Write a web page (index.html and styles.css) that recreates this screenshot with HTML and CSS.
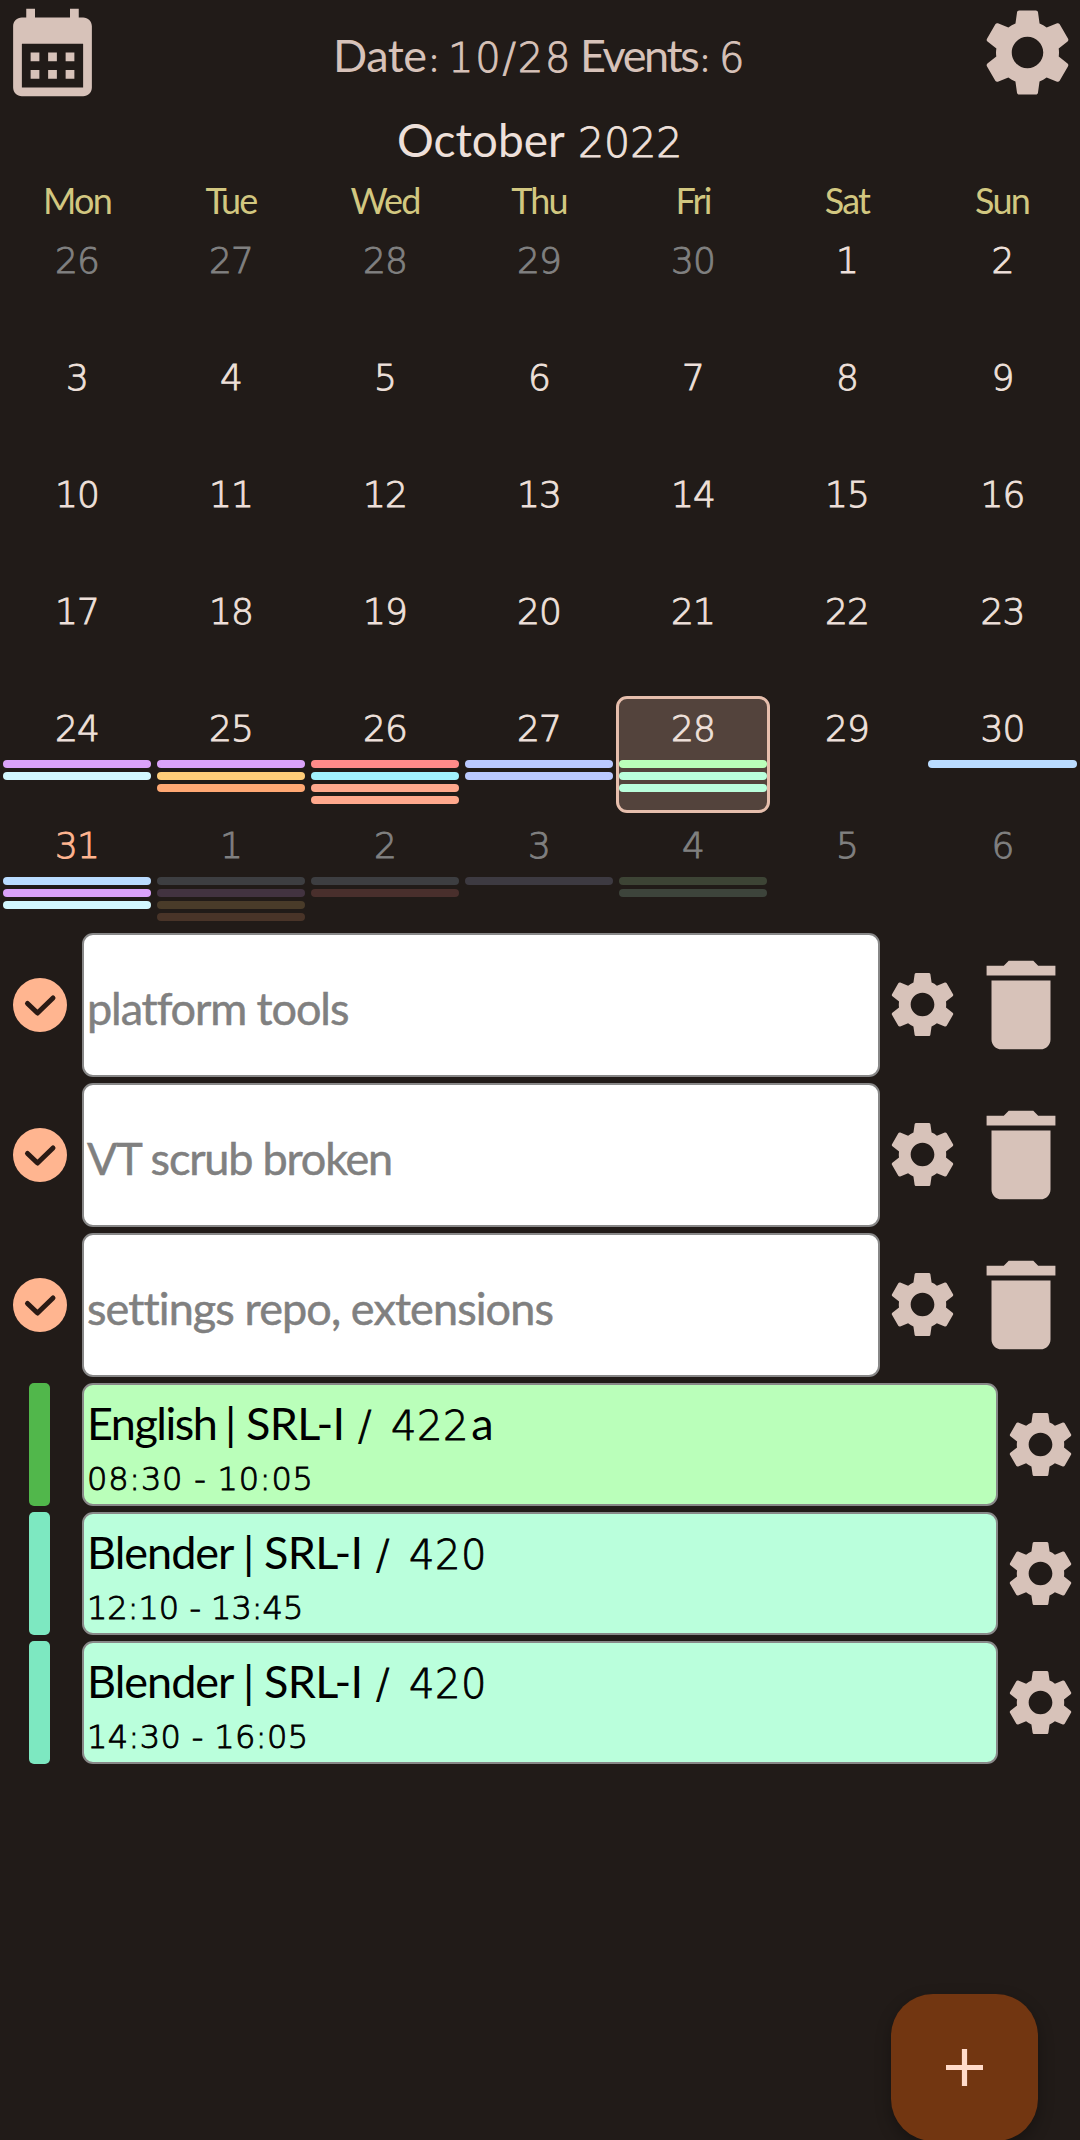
FILE: index.html
```html
<!DOCTYPE html>
<html lang="en">
<head>
<meta charset="utf-8">
<title>Calendar</title>
<link rel="stylesheet" href="styles.css">
</head>
<body>
<svg class="defs" aria-hidden="true">
  <symbol id="gear" viewBox="0 0 24 24"><path d="M19.14 12.94c.04-.3.06-.61.06-.94 0-.32-.02-.64-.07-.94l2.03-1.58c.18-.14.23-.41.12-.61l-1.92-3.32c-.12-.22-.37-.29-.59-.22l-2.39.96c-.5-.38-1.03-.7-1.62-.94L14.4 2.81c-.04-.24-.24-.41-.48-.41h-3.84c-.24 0-.43.17-.47.41l-.36 2.54c-.59.24-1.13.57-1.62.94l-2.39-.96c-.22-.08-.47 0-.59.22L2.74 8.87c-.12.21-.08.47.12.61l2.03 1.58c-.05.3-.09.63-.09.94s.02.64.07.94l-2.03 1.58c-.18.14-.23.41-.12.61l1.92 3.32c.12.22.37.29.59.22l2.39-.96c.5.38 1.03.7 1.62.94l.36 2.54c.05.24.24.41.48.41h3.84c.24 0 .44-.17.47-.41l.36-2.54c.59-.24 1.13-.56 1.62-.94l2.39.96c.22.08.47 0 .59-.22l1.92-3.32c.12-.22.07-.47-.12-.61l-2.01-1.58zM12 15.6c-1.98 0-3.6-1.62-3.6-3.6s1.62-3.6 3.6-3.6 3.6 1.62 3.6 3.6-1.62 3.6-3.6 3.6z"/></symbol>
  <symbol id="trash" viewBox="0 0 24 24"><path d="M6 19c0 1.100.9 2 2 2h8c1.100 0 2-.9 2-2V7H6v12zM19 4h-3.500l-1-1h-5l-1 1H5v2h14V4z"/></symbol>
  <symbol id="calendar" viewBox="0 0 24 24"><path fill-rule="evenodd" d="M19 4h-1V2h-2v2H8V2H6v2H5c-1.110 0-2 .9-2 2v14c0 1.100.89 2 2 2h14c1.100 0 2-.9 2-2V6c0-1.100-.9-2-2-2zm0 16H5V10h14v10zM7 12h2v2H7zM11 12h2v2h-2zM15 12h2v2h-2zM7 16h2v2H7zM11 16h2v2h-2zM15 16h2v2h-2z"/></symbol>
  <symbol id="check" viewBox="0 0 54 54"><circle cx="27" cy="27" r="27" fill="#ffb590"/><path d="M14.500 25.500 24.500 35 40 20" fill="none" stroke="#2b1a14" stroke-width="5" stroke-linecap="round" stroke-linejoin="round"/></symbol>
</svg>
<main class="app">
  <header class="bar">
    <svg class="icon-lg"><use href="#calendar"/></svg>
    <div class="status"><span class="t1">Date</span><span class="c1">:</span><span class="n1">10/28</span><span class="t2">Events</span><span class="c1">:</span><span class="n2">6</span></div>
    <svg class="icon-lg"><use href="#gear"/></svg>
  </header>
  <h1 class="month"><span class="name">October</span><span class="year">2022</span></h1>
  <div class="weekdays"><span>Mon</span><span>Tue</span><span>Wed</span><span>Thu</span><span>Fri</span><span>Sat</span><span>Sun</span></div>
  <section class="grid">
    <div class="day out"><b>26</b></div><div class="day out"><b>27</b></div><div class="day out"><b>28</b></div><div class="day out"><b>29</b></div><div class="day out"><b>30</b></div><div class="day"><b>1</b></div><div class="day"><b>2</b></div>
    <div class="day"><b>3</b></div><div class="day"><b>4</b></div><div class="day"><b>5</b></div><div class="day"><b>6</b></div><div class="day"><b>7</b></div><div class="day"><b>8</b></div><div class="day"><b>9</b></div>
    <div class="day"><b>10</b></div><div class="day"><b>11</b></div><div class="day"><b>12</b></div><div class="day"><b>13</b></div><div class="day"><b>14</b></div><div class="day"><b>15</b></div><div class="day"><b>16</b></div>
    <div class="day"><b>17</b></div><div class="day"><b>18</b></div><div class="day"><b>19</b></div><div class="day"><b>20</b></div><div class="day"><b>21</b></div><div class="day"><b>22</b></div><div class="day"><b>23</b></div>
    <div class="day"><b>24</b><i class="violet"></i><i class="ice"></i></div>
    <div class="day"><b>25</b><i class="violet"></i><i class="gold"></i><i class="orange"></i></div>
    <div class="day"><b>26</b><i class="red"></i><i class="cyan"></i><i class="salmon"></i><i class="salmon"></i></div>
    <div class="day"><b>27</b><i class="peri"></i><i class="peri"></i></div>
    <div class="day selected"><b>28</b><i class="green"></i><i class="mint"></i><i class="mint"></i></div>
    <div class="day"><b>29</b></div>
    <div class="day"><b>30</b><i class="sky"></i></div>
    <div class="day today"><b>31</b><i class="sky"></i><i class="violet"></i><i class="ice"></i></div>
    <div class="day out"><b>1</b><i class="sky"></i><i class="violet"></i><i class="gold"></i><i class="orange"></i></div>
    <div class="day out"><b>2</b><i class="sky"></i><i class="red"></i></div>
    <div class="day out"><b>3</b><i class="peri"></i></div>
    <div class="day out"><b>4</b><i class="green"></i><i class="mint"></i></div>
    <div class="day out"><b>5</b></div>
    <div class="day out"><b>6</b></div>
  </section>
  <section class="list">
    <article class="task"><svg class="check"><use href="#check"/></svg><div class="card"><span class="p1">platform tools</span></div><svg class="icon-sm"><use href="#gear"/></svg><svg class="trash"><use href="#trash"/></svg></article>
    <article class="task"><svg class="check"><use href="#check"/></svg><div class="card"><span class="p2">VT scrub broken</span></div><svg class="icon-sm"><use href="#gear"/></svg><svg class="trash"><use href="#trash"/></svg></article>
    <article class="task"><svg class="check"><use href="#check"/></svg><div class="card"><span class="p3">settings repo, extensions</span></div><svg class="icon-sm"><use href="#gear"/></svg><svg class="trash"><use href="#trash"/></svg></article>
    <article class="event"><div class="tag leaf"></div><div class="card green"><div class="title"><span class="subject english">English</span><span class="sep">|</span><span class="place">SRL-I</span><span class="slash">/</span><span class="room">422</span><span class="suffix">a</span></div><div class="time wide">08:30 - 10:05</div></div><svg class="icon-sm"><use href="#gear"/></svg></article>
    <article class="event"><div class="tag aqua"></div><div class="card mint"><div class="title"><span class="subject blender">Blender</span><span class="sep">|</span><span class="place">SRL-I</span><span class="slash">/</span><span class="room">420</span></div><div class="time">12:10 - 13:45</div></div><svg class="icon-sm"><use href="#gear"/></svg></article>
    <article class="event"><div class="tag aqua"></div><div class="card mint"><div class="title"><span class="subject blender">Blender</span><span class="sep">|</span><span class="place">SRL-I</span><span class="slash">/</span><span class="room">420</span></div><div class="time mid">14:30 - 16:05</div></div><svg class="icon-sm"><use href="#gear"/></svg></article>
  </section>
  <button class="fab" aria-label="Add"><svg viewBox="0 0 37 37"><path d="M0 18.500h37M18.500 0v37"/></svg></button>
</main>
</body>
</html>
```
FILE: styles.css
```css
* { box-sizing: border-box; }
html, body { margin: 0; height: 2140px; overflow: hidden; background: #211b18; }
.defs { position: absolute; width: 0; height: 0; }
svg { display: block; flex: none; fill: #d7c2b9; }
.app {
  position: relative; width: 1080px; height: 2140px; overflow: hidden;
  display: flex; flex-direction: column;
  font-family: Lato, "Open Sans", sans-serif; font-variant-ligatures: none;
  color: #eee0da; white-space: nowrap;
}
.bar { height: 105px; display: flex; color: #d7c2b9; font-size: 45px; }
.icon-lg { width: 105px; height: 105px; }
.status { flex: 1; padding: 28px 0 0 228px; display: flex; align-items: baseline; line-height: 54px; }
.t1 { width: 97px; letter-spacing: -0.5px; }
.c1 { width: 18px; font-size: 32px; }
.n1, .n2, .year, .room, .slash, .time, .day b {
  font-family: "DejaVu Sans", sans-serif; font-weight: 200; -webkit-text-stroke: 0.9px currentColor;
}
.n1 { width: 132px; font-size: 40px; letter-spacing: 1.8px; }
.t2 { width: 121px; letter-spacing: -2.4px; }
.n2 { font-size: 40px; }
.month { margin: 0; height: 72px; padding: 8px 0 0 397px; display: flex; align-items: baseline; font-size: 46px; font-weight: 400; line-height: 54px; }
.name { width: 181px; }
.year { font-size: 41px; }
.weekdays { height: 51px; display: grid; grid-template-columns: repeat(6, 154px) 156px; text-align: center; font-size: 36px; letter-spacing: -1.8px; line-height: 46px; color: #d2c780; }
.grid { height: 705px; display: grid; grid-template-columns: repeat(6, 154px) 156px; grid-auto-rows: 117px; }
.day { padding: 0 3px; display: flex; flex-direction: column; gap: 4px; }
.day:nth-child(7n) { padding-left: 4px; }
.day b { height: 60px; font-size: 36px; letter-spacing: -0.8px; line-height: 65px; text-align: center; }
.day i { height: 8px; border-radius: 4px; }
.out b { color: #808080; }
.out i { opacity: .18; }
.today b { color: #ffb590; }
.selected { background: #53433c; border: 3px solid #e6beac; border-radius: 11px; padding: 0; }
.selected b { height: 57px; line-height: 59px; }
.violet { background: #daa2f9; }
.ice { background: #d2f8ff; }
.gold { background: #ffcd79; }
.orange { background: #ffa873; }
.red { background: #ff8a8a; }
.cyan { background: #a2f2ff; }
.salmon { background: #ffa88c; }
.peri { background: #bac9ff; }
.green { background: #baffba; }
.mint { background: #baffdc; }
.sky { background: #badcff; }
.list { display: flex; flex-direction: column; gap: 6px; color: #000; }
.task { height: 144px; display: grid; grid-template-columns: 82px 798px 82px 118px; grid-template-rows: 144px; align-items: center; }
.check { width: 54px; height: 54px; margin-left: 13px; }
.card { height: 100%; border: 2px solid #888; border-radius: 11px; padding-left: 3px; }
.task .card { background: #fff; color: #808080; font-size: 45px; line-height: 146px; -webkit-text-stroke: 0.5px currentColor; }
.p1 { letter-spacing: -1.1px; }
.p2 { letter-spacing: -1.2px; }
.p3 { letter-spacing: -0.9px; }
.icon-sm { width: 79px; height: 79px; margin-left: 3px; margin-top: -1px; }
.trash { width: 118px; height: 118px; }
.event { height: 123px; display: grid; grid-template-columns: 29px 21px 32px 916px 82px; grid-template-rows: 123px; align-items: center; }
.tag { grid-column: 2; height: 100%; border-radius: 5px; }
.event .card { grid-column: 4; }
.leaf { background: #51b74b; }
.aqua { background: #7de8c1; }
.title { height: 68px; display: flex; align-items: baseline; font-size: 45px; line-height: 76px; }
.subject { letter-spacing: -1.5px; }
.english { width: 138px; }
.blender { width: 156px; letter-spacing: -1px; }
.sep { width: 21px; }
.place { width: 112px; letter-spacing: -0.7px; }
.slash { width: 33px; font-size: 40px; }
.room { font-size: 40px; letter-spacing: 0.6px; }
.suffix { margin-left: 2px; }
.time { font-size: 32px; line-height: 53px; }
.mid { letter-spacing: 0.4px; }
.wide { letter-spacing: 0.8px; }
.fab {
  position: absolute; left: 891px; top: 1994px; width: 147px; height: 147px; padding: 0;
  border: 0; border-radius: 42px; background: #723611; box-shadow: 0 6px 16px rgba(0,0,0,.3);
  display: flex; align-items: center; justify-content: center;
}
.fab svg { width: 37px; height: 37px; stroke: #ffdbca; stroke-width: 5.200; }
```
